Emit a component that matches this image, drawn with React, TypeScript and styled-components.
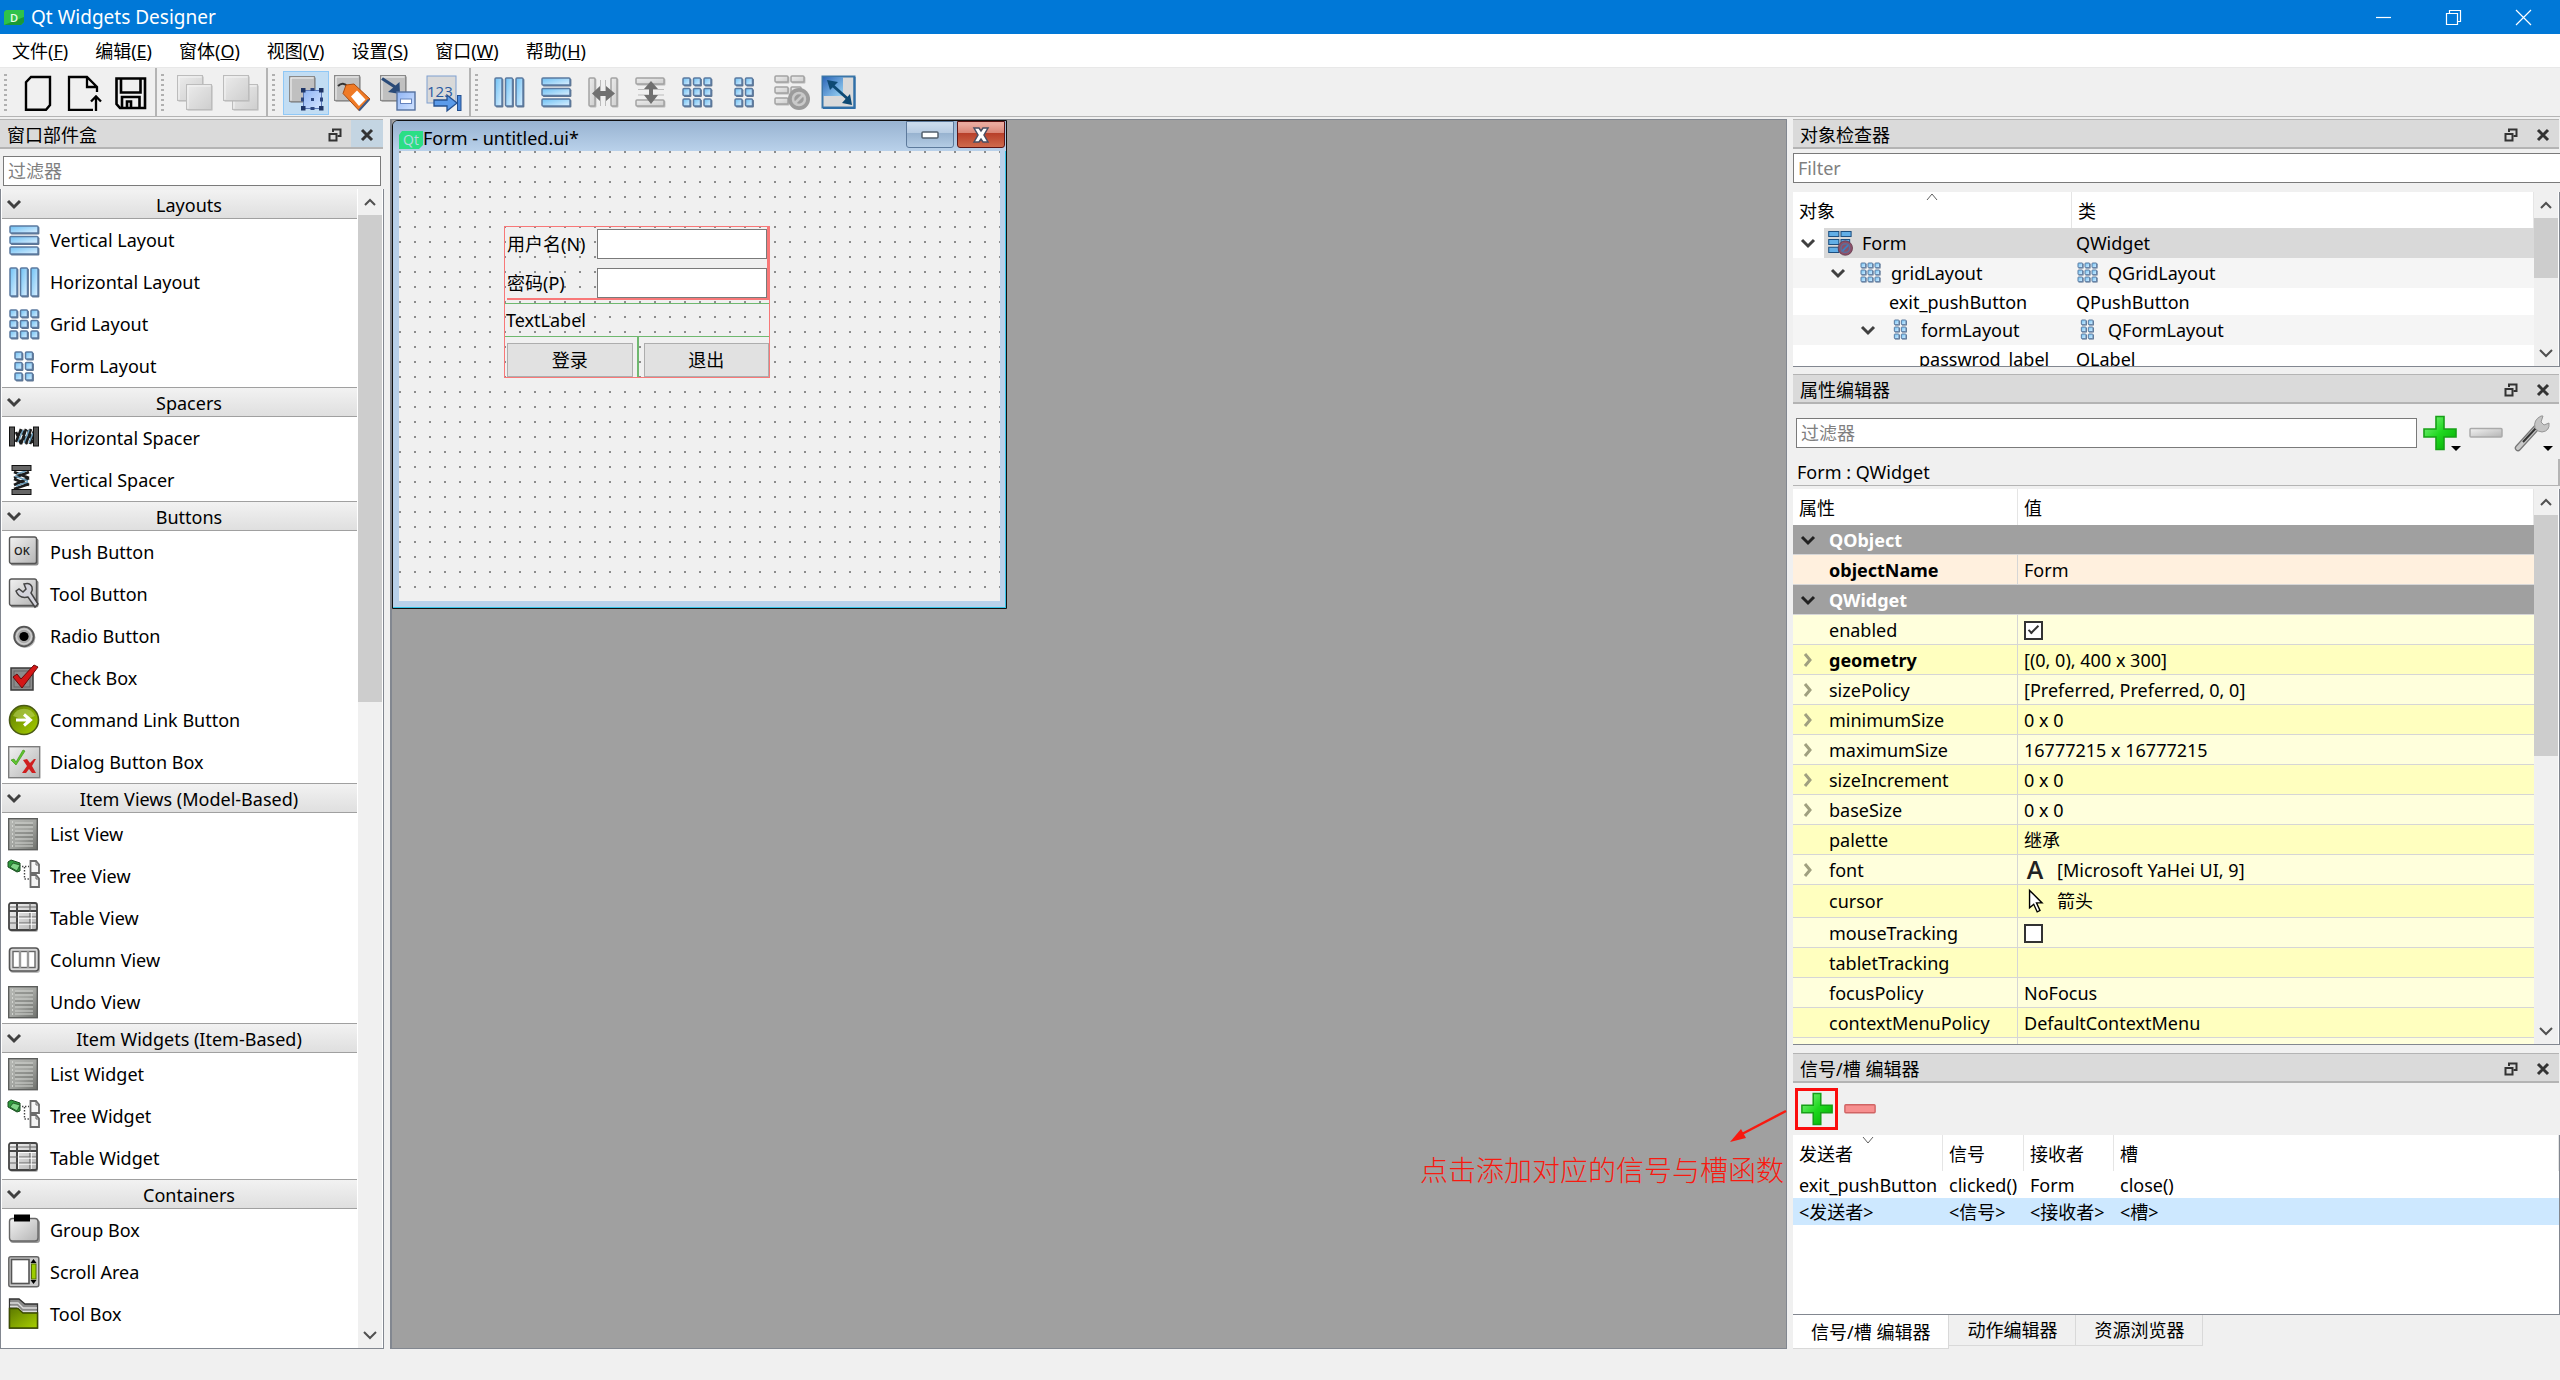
import React from "react";
import styled, { createGlobalStyle, css } from "styled-components";

const c = {
  face: "#f0f0f0",
  title: "#dadada",
  line: "#b4b4b4",
  frame: "#828790",
  desk: "#a0a0a0",
  accent: "#0078d7",
};

const Global = createGlobalStyle`
  *, *::before, *::after { box-sizing: border-box; }
  body {
    margin: 0;
    background: ${c.face};
    color: #000;
    font: 18px/24px "Noto Sans", "Noto Sans CJK SC", sans-serif;
  }
  button, input { font: inherit; color: inherit; }
  button { border: 0; padding: 0; background: none; }
  svg { display: block; flex: none; overflow: visible; }
`;

/* ---------- icon drawings ---------- */

const HiddenSvg = styled.svg`
  position: absolute;
  width: 0;
  height: 0;
`;

const Defs = () => (
  <HiddenSvg aria-hidden="true">
    <defs>
      <linearGradient id="blue" x1="0" y1="0" x2="1" y2="1">
        <stop offset="0" stopColor="#6cc0f4" />
        <stop offset="1" stopColor="#dcf0ff" />
      </linearGradient>
      <linearGradient id="grey" x1="0" y1="0" x2="1" y2="1">
        <stop offset="0" stopColor="#f2f2f2" />
        <stop offset="1" stopColor="#b4b4b4" />
      </linearGradient>
      <linearGradient id="pale" x1="0" y1="0" x2="1" y2="1">
        <stop offset="0" stopColor="#ececec" />
        <stop offset="1" stopColor="#cecece" />
      </linearGradient>
      <linearGradient id="list" x1="0" y1="0" x2="1" y2="1">
        <stop offset="0" stopColor="#b8bab6" />
        <stop offset="0.5" stopColor="#a4a6a2" />
        <stop offset="1" stopColor="#6e706c" />
      </linearGradient>
      <linearGradient id="green" x1="0" y1="0" x2="1" y2="1">
        <stop offset="0" stopColor="#8cf58c" />
        <stop offset="0.5" stopColor="#1fd81f" />
        <stop offset="1" stopColor="#00a800" />
      </linearGradient>
      <linearGradient id="lime" x1="0" y1="0" x2="1" y2="1">
        <stop offset="0" stopColor="#5d7a00" />
        <stop offset="1" stopColor="#a8d000" />
      </linearGradient>
      <linearGradient id="handle" x1="0" y1="0" x2="1" y2="1">
        <stop offset="0" stopColor="#8fb4f4" />
        <stop offset="1" stopColor="#d3e4ff" />
      </linearGradient>
      <linearGradient id="adjust" x1="0" y1="0" x2="1" y2="1">
        <stop offset="0" stopColor="#2c66b8" />
        <stop offset="1" stopColor="#9ad4f4" />
      </linearGradient>
    </defs>
  </HiddenSvg>
);

type Box = [number, number, number, number];

const Blocks = ({ list, muted }: { list: Box[]; muted?: boolean }) => (
  <>
    {list.map(([x, y, w, h]) => (
      <g key={`${x}-${y}`}>
        <rect x={x + 0.8} y={y + 0.8} width={w + 0.6} height={h + 0.6} rx="1" fill={muted ? "#b8b8b8" : "#5f7590"} />
        <rect
          x={x}
          y={y}
          width={w}
          height={h}
          rx="1"
          fill={muted ? "url(#pale)" : "url(#blue)"}
          stroke={muted ? "#a2a2a2" : "#5b7aa0"}
          strokeWidth="1.5"
        />
      </g>
    ))}
  </>
);

const cells = (xs: number[], ys: number[], s: number): Box[] =>
  ys.flatMap((y) => xs.map((x): Box => [x, y, s, s]));

const Square = ({ x, y, s, pale }: { x: number; y: number; s: number; pale?: boolean }) => (
  <g>
    <rect x={x + 1} y={y + 1} width={s} height={s} fill={pale ? "#b4b4b4" : "#707070"} />
    <rect x={x} y={y} width={s} height={s} fill={pale ? "url(#pale)" : "#c0c0c0"} stroke={pale ? "#bcbcbc" : "#8a8a8a"} />
    <path d={`M${x + 1.5} ${y + s - 1}V${y + 1.5}H${x + s - 1}`} fill="none" stroke="#f4f4f4" />
  </g>
);

const ListSheet = (
  <g>
    <rect x="0.7" y="0.7" width="28.6" height="31" fill="url(#list)" stroke="#5c5e5c" strokeWidth="1.4" />
    <path d="M7 5H25M7 9H25M7 13H25M7 17H25M7 21H25M7 25H25M7 28H25" stroke="#d2d4d0" strokeWidth="1.2" />
    <path d="M7 7H25M7 15H25M7 19H25" stroke="#7c7e7a" />
    <path d="M4.5 3V30" stroke="#d2d4d0" strokeDasharray="2 2" />
  </g>
);

const TreeDrawing = (
  <g>
    <path d="M0 2l3-2 9 3v8l-3 1-9-5z" fill="#2f9a3c" stroke="#1a4d20" />
    <path d="M2 7l3-4 7 2-3 6z" fill="#7fd486" stroke="#1a4d20" strokeWidth="0.8" />
    <path d="M14 6.5H21M16.5 7V19H22" fill="none" stroke="#444" strokeWidth="1.4" strokeDasharray="1.4 1.6" />
    <path d="M22.5 1H28l3 3.5V13H22.5zM22.5 15H28l3 3.5V27H22.5z" fill="#f4f4f4" stroke="#6b6b6b" strokeWidth="1.8" />
    <path d="M28 1v4h3M28 15v4h3" fill="none" stroke="#6b6b6b" />
  </g>
);

const TableDrawing = (
  <g>
    <rect x="2" y="2" width="28" height="28" rx="2" fill="#bbb" />
    <rect x="1" y="1" width="28" height="27" rx="2" fill="url(#grey)" stroke="#444" strokeWidth="1.8" />
    <path d="M9 1V28M1 9H29" stroke="#444" strokeWidth="2" />
    <path d="M22 1V28M2 15H28M2 21H28M2 5H28" stroke="#666" strokeWidth="1.2" />
    <path d="M10.5 10V27M10 10.5H28M23.3 10V27M11 16.2H28M11 22.2H28" stroke="#fff" strokeWidth="0.9" />
  </g>
);

const drawings: Record<string, React.ReactNode> = {
  newForm: <path d="M11 2H30V30L26 34.800H6V7.200Z" fill="none" stroke="#000" strokeWidth="2.4" />,
  openForm: (
    <path
      d="M27 34.800H3V2H21L31 12V17M21 2V12H31M30 36V22M25 26.500L30 21.500 35 26.500"
      fill="none"
      stroke="#000"
      strokeWidth="2.300"
    />
  ),
  saveForm: (
    <path
      d="M4.500 3.500H33V33H8L4.500 29ZM9 3.500V17.500H28.500V3.500M10 33V22H27.500V33M15 33V26.500H19V33"
      fill="none"
      stroke="#000"
      strokeWidth="2.600"
    />
  ),
  toBack: (
    <>
      <Square x={0.5} y={0.5} s={25} pale />
      <Square x={9.5} y={9.5} s={25} pale />
    </>
  ),
  toFront: (
    <>
      <Square x={9.5} y={9.5} s={25} pale />
      <Square x={0.5} y={0.5} s={25} pale />
    </>
  ),
  editWidgets: (
    <>
      <Square x={1.5} y={1.5} s={25} />
      <rect x="15.500" y="15.500" width="18" height="18" fill="url(#handle)" stroke="#5b78b8" />
      {cells([13, 31], [13, 31], 4).map(([x, y]) => (
        <rect key={`${x}${y}`} x={x} y={y} width="4.500" height="4.500" fill="#1f3566" />
      ))}
      <path d="M22.500 13h4v3h-4zM22.500 32h4v3h-4zM13 22.500h3v4h-3zM32 22.500h3v4h-3zM23 23h3v3h-3z" fill="#2c4680" />
    </>
  ),
  editSignals: (
    <>
      <Square x={0.5} y={0.5} s={25} />
      <path d="M4 11q5-5 10 1" fill="none" stroke="#333" strokeWidth="2" />
      <path d="M9 18.500L12 10l8-1L36 24 25 35.500Z" fill="#ef7a26" stroke="#a84b10" />
      <path d="M17 21.500l6-6 8.500 9-6.500 6.500z" fill="#fff" />
      <path d="M25 35.500l10-11" stroke="#3c5a88" strokeWidth="2" />
    </>
  ),
  editBuddies: (
    <>
      <Square x={0.5} y={0.5} s={25} />
      <path d="M2 3.500L15 12" stroke="#294a78" strokeWidth="3.200" />
      <path d="M19.500 7L20 19 8 17Z" fill="#294a78" />
      <rect x="17" y="17" width="18" height="18" fill="url(#handle)" stroke="#54719f" strokeWidth="1.400" />
      <rect x="20.500" y="24" width="11" height="4.500" fill="#fff" stroke="#6583bd" />
    </>
  ),
  tabOrder: (
    <>
      <rect x="1" y="1" width="29" height="27" fill="#d9d9d9" stroke="#7f9fd0" />
      <text x="1" y="22" fontSize="15" fill="#2a5aa0" fontFamily="Open Sans, sans-serif">123</text>
      <path d="M8 25H21V20L31 28 21 36V31H8Z" fill="#5b9bea" stroke="#24508f" strokeWidth="1.300" />
      <rect x="31.500" y="20.500" width="3.500" height="15" fill="#4a88dc" stroke="#24508f" />
    </>
  ),
  hLayout: <Blocks list={[[3, 3, 7, 28], [13.5, 3, 7, 28], [24, 3, 7, 28]]} />,
  vLayout: <Blocks list={[[3, 3, 28, 7], [3, 13.5, 28, 7], [3, 24, 28, 7]]} />,
  hSplit: (
    <>
      <Blocks muted list={[[3, 3, 6, 28], [25, 3, 6, 28]]} />
      <path d="M14.500 5V31M19.500 5V31" stroke="#bbb" />
      <path d="M6 18.500L14 11v5h6v-5l9 7.500-9 7.500v-5h-6v5z" fill="#707070" />
    </>
  ),
  vSplit: (
    <>
      <Blocks muted list={[[3, 3, 28, 6], [3, 25, 28, 6]]} />
      <path d="M5 14.500H31M5 20H31" stroke="#bbb" />
      <path d="M18 6l7 8h-5v6h5l-7 9-7-9h5v-6h-5z" fill="#707070" />
    </>
  ),
  grid: <Blocks list={cells([3, 13.5, 24], [3, 13.5, 24], 7)} />,
  form: <Blocks list={cells([8, 18.5], [3, 13.5, 24], 7)} />,
  breakLayout: (
    <>
      <Blocks muted list={[[1, 1, 13, 6], [17, 1, 13, 6], [1, 12, 13, 6], [17, 12, 10, 6], [1, 23, 13, 6]]} />
      <circle cx="25" cy="24" r="11" fill="#9b9b9b" />
      <circle cx="25" cy="24" r="6" fill="none" stroke="#c9c9c9" strokeWidth="2.500" />
      <path d="M21 28l8-8" stroke="#c9c9c9" strokeWidth="2.500" />
    </>
  ),
  brokenForm: (
    <>
      <g stroke="#1d4f80" strokeWidth="1.400" fill="#62aee6">
        <path d="M1 2h14v7H1zM18 2h14v7H18zM1 13h14v7H1zM18 13h12v7H18zM1 24h14v7H1z" />
      </g>
      <circle cx="24" cy="25" r="10" fill="#8c5068" stroke="#5d3348" />
      <path d="M19 30l10-10" stroke="#3d7fc0" strokeWidth="2.600" />
      <circle cx="24" cy="25" r="6" fill="none" stroke="#5b6f9c" strokeWidth="2" />
    </>
  ),
  adjust: (
    <>
      <rect x="1.500" y="1.500" width="32" height="31" fill="#dadada" stroke="#3b76a8" strokeWidth="2" />
      <rect x="2" y="2" width="20" height="19" fill="url(#adjust)" />
      <path d="M10 9L28 25" stroke="#0e4a74" strokeWidth="3" />
      <path d="M6 5l11 2-8 8zM31 30l-10-2 8-9z" fill="#0e4a74" />
      <path d="M33.500 2V33H2" fill="none" stroke="#2f6fa8" strokeWidth="2" />
    </>
  ),
  hSpacer: (
    <>
      <path d="M8 20L13 7M13 22L18 7M18 22L23 7M22 22L26 9M8 10L13 22M14 8L19 22M20 8L25 21" stroke="#1c1c1c" strokeWidth="2.600" />
      <path d="M10 20L15 8M16 21L21 8M21 21L25 11" stroke="#6c9dba" strokeWidth="1.500" />
      <rect x="1.500" y="5" width="5" height="19" fill="#555" stroke="#111" />
      <rect x="25.500" y="5" width="5" height="19" fill="#555" stroke="#111" />
    </>
  ),
  vSpacer: (
    <>
      <path d="M6 8L21 14M6 14L21 8M6 15L21 21M6 21L21 14M6 25L21 20" stroke="#1c1c1c" strokeWidth="2.800" />
      <path d="M7 12L20 17M8 22L20 18M9 10L18 7" stroke="#6c9dba" strokeWidth="1.600" />
      <rect x="4" y="1.500" width="19" height="5" fill="#666" stroke="#111" />
      <rect x="4" y="25.500" width="19" height="5" fill="#666" stroke="#111" />
    </>
  ),
  push: (
    <>
      <rect x="2.500" y="2.500" width="28" height="27" rx="2" fill="#8a8a8a" />
      <rect x="1.500" y="1" width="27" height="26.500" rx="2" fill="url(#grey)" stroke="#555" strokeWidth="1.400" />
      <text x="6" y="18.500" fontSize="11" fontWeight="600" fill="#222" fontFamily="Open Sans, sans-serif">OK</text>
    </>
  ),
  tool: (
    <>
      <rect x="2.500" y="2.500" width="28" height="27" rx="2" fill="#8a8a8a" />
      <rect x="1.500" y="1" width="27" height="26.500" rx="2" fill="url(#grey)" stroke="#555" strokeWidth="1.400" />
      <path d="M8 13l3-2 4 3 3-3-2-5q6-2 8 3 1 3-1 6l7 11-3 3-7-10q-9 2-12-6z" fill="#d4d4dc" stroke="#444" strokeWidth="1.500" />
    </>
  ),
  radio: (
    <>
      <circle cx="17" cy="17.500" r="10.500" fill="#bbb" />
      <circle cx="16" cy="16.500" r="9.800" fill="#a8a8a8" stroke="#555" strokeWidth="1.800" />
      <circle cx="16" cy="16.500" r="7.500" fill="none" stroke="#cfcfcf" strokeWidth="1.500" />
      <circle cx="16" cy="16.500" r="4.600" fill="#000" />
    </>
  ),
  check: (
    <>
      <rect x="3" y="6" width="22" height="22" fill="#8c8c8c" stroke="#3a3a3a" strokeWidth="1.500" />
      <rect x="6" y="9" width="16" height="16" fill="none" stroke="#666" />
      <path d="M5 15l4-3 4 5L26 3l4 2L14 26z" fill="#d41717" stroke="#6a0a0a" />
    </>
  ),
  command: (
    <>
      <circle cx="16" cy="16" r="14.500" fill="url(#lime)" stroke="#4a5a14" strokeWidth="1.600" />
      <path d="M5 12a12 12 0 0 1 22 0q-11 5-22 0z" fill="#c5dd6a" opacity="0.500" />
      <path d="M8 16H22M16 10.500L22.500 16 16 21.500" fill="none" stroke="#fff" strokeWidth="3" />
    </>
  ),
  dialog: (
    <>
      <rect x="0.700" y="0.700" width="31" height="31" fill="url(#grey)" stroke="#7d7d7d" strokeWidth="1.400" />
      <path d="M3 14l3-1 2 3 7-12 2 1L8 19z" fill="#5fc52e" stroke="#3f9a18" strokeWidth="0.700" />
      <path d="M15 14l4-1 3 4 4-4h2l-4 7 4 7h-4l-3-4-3 4h-4l5-7z" fill="#cf1f1f" />
    </>
  ),
  list: ListSheet,
  tree: TreeDrawing,
  table: TableDrawing,
  column: (
    <>
      <rect x="2" y="5" width="30" height="24" rx="3" fill="#bbb" />
      <rect x="1.500" y="4" width="29" height="23" rx="3" fill="#d8d8d8" stroke="#555" strokeWidth="1.600" />
      <rect x="5" y="7.500" width="22" height="16" fill="#fff" stroke="#666" strokeWidth="1.400" />
      <path d="M12 7V24M20 7V24" stroke="#999" strokeWidth="2.400" />
    </>
  ),
  group: (
    <>
      <rect x="2" y="6" width="30" height="23" rx="3" fill="#9a9a9a" />
      <rect x="1.500" y="4.500" width="28.500" height="22.500" rx="3" fill="url(#grey)" stroke="#666" strokeWidth="1.400" />
      <rect x="6" y="0.500" width="16" height="7" fill="#000" />
    </>
  ),
  scroll: (
    <>
      <rect x="0.800" y="0.800" width="30" height="30" rx="2" fill="#c9c9c9" stroke="#666" strokeWidth="1.500" />
      <rect x="3.500" y="3.500" width="17.500" height="24" fill="#fff" stroke="#555" strokeWidth="1.600" />
      <rect x="23.500" y="8" width="4.500" height="15" fill="#9ccc00" stroke="#577200" />
      <path d="M22.500 7l3-4 3 4zM22.500 24l3 4 3-4z" fill="#000" />
    </>
  ),
  toolbox: (
    <>
      <path d="M1.500 1H11l6 5H29.500V30H1.500Z" fill="#8b8b8b" stroke="#333" strokeWidth="1.300" />
      <path d="M2 5H10l5 5H29M2 8.500H9l5 5H29" fill="none" stroke="#ddd" strokeWidth="1.300" />
      <path d="M1.500 10.500H10l5 4.500H29.500V30H1.500Z" fill="url(#lime)" stroke="#3d4d00" strokeWidth="1.500" />
    </>
  ),
  plus: (
    <path
      d="M14 1.500h8v12.500h12v8H22v12.500h-8V22H2v-8h12z"
      fill="url(#green)"
      stroke="#17a017"
      strokeWidth="1.600"
    />
  ),
  minusGrey: <rect x="2" y="13.500" width="32" height="8.500" rx="1" fill="url(#grey)" stroke="#aaa" strokeWidth="1.500" />,
  minusRed: <rect x="2" y="13.500" width="32" height="8.500" rx="1" fill="#f78f8f" stroke="#d06464" strokeWidth="1.500" />,
  wrench: (
    <>
      <path d="M4 33L24 11" stroke="#777" strokeWidth="6.500" strokeLinecap="round" />
      <path d="M4 33L24 11" stroke="#c9c9c9" strokeWidth="4" strokeLinecap="round" />
      <path d="M9 27L22 13" stroke="#333" strokeWidth="2" />
      <path d="M21 13q-2-8 6-12l2 0-2 6 3 3 5-2q1 8-7 9-4 0-7-4z" fill="#c4c4c4" stroke="#969696" />
    </>
  ),
  arrow: <path d="M8 2V27L14 22 19 33 23 31 18 20H26Z" fill="#fff" stroke="#000" strokeWidth="2" />,
  letterA: (
    <text x="4" y="31" fontSize="36" fontWeight="600" fill="#222" fontFamily="Open Sans, sans-serif">A</text>
  ),
};

type IconProps = { name: string; size?: number; view?: string };
const Icon = ({ name, size = 36, view = "0 0 36 36" }: IconProps) => (
  <svg width={size} height={size} viewBox={view} aria-hidden="true">
    {drawings[name]}
  </svg>
);

type Dir = "up" | "down" | "right";
const chevrons: Record<Dir, string> = {
  up: "M2 10L7 5L12 10",
  down: "M1 4L7 10L13 4",
  right: "M4 1L9 7L4 13",
};
const Chevron = ({ dir, color = "#404040", weight = 3 }: { dir: Dir; color?: string; weight?: number }) => (
  <svg width="14" height="14" viewBox="0 0 14 14" aria-hidden="true">
    <path d={chevrons[dir]} fill="none" stroke={color} strokeWidth={weight} />
  </svg>
);

/* ---------- shared parts ---------- */

const Screen = styled.div`
  display: flex;
  flex-direction: column;
  height: 100vh;
  overflow: hidden;
`;

const TitleBar = styled.header`
  display: flex;
  align-items: center;
  flex: none;
  height: 34px;
  padding-left: 4px;
  gap: 7px;
  background: ${c.accent};
  color: #fff;
`;

const WindowTitle = styled.h1`
  flex: 1;
  margin: 0;
  font-size: 19px;
  font-weight: 400;
`;

const CaptionButton = styled.button`
  display: grid;
  place-items: center;
  width: 70px;
  height: 34px;
`;

const CaptionButtons = styled.div`
  display: flex;
  padding-right: 2px;
`;

const MenuBar = styled.nav`
  display: flex;
  align-items: center;
  gap: 3px;
  flex: none;
  height: 34px;
  background: #fff;
  border-bottom: 1px solid #e8e8e8;
`;

const MenuItem = styled.button`
  height: 32px;
  padding: 0 12px;
`;

const ToolRow = styled.div`
  display: flex;
  flex: none;
  height: 49px;
  border-bottom: 1px solid ${c.line};
`;

const ToolGroup = styled.div<{ $last?: boolean }>`
  display: flex;
  align-items: center;
  gap: ${(p) => (p.$last ? 1 : 0)}px;
  padding: 2px 2px 0 4px;
  ${(p) => !p.$last && css`border-right: 2px solid ${c.line};`}
`;

const Grip = styled.span`
  width: 3px;
  height: 39px;
  margin-right: 8px;
  background: repeating-linear-gradient(#b0b0b0 0 2px, transparent 2px 5px);
`;

const ToolButton = styled.button<{ $on?: boolean }>`
  display: grid;
  place-items: center;
  width: 46px;
  height: 44px;
  border: 1px solid ${(p) => (p.$on ? "#90c8f6" : "transparent")};
  background: ${(p) => (p.$on ? "#c2ddf3" : "none")};
`;

const Workspace = styled.main`
  display: grid;
  grid-template-columns: 384px minmax(0, 1fr) 767px;
  column-gap: 6px;
  flex: 1;
  min-height: 0;
  padding: 2px 0 31px;
`;

const Column = styled.div`
  display: flex;
  flex-direction: column;
  min-width: 0;
  min-height: 0;
`;

const DockBar = styled.div`
  display: flex;
  align-items: center;
  flex: none;
  height: 30px;
  margin-right: 1px;
  padding-left: 7px;
  background: ${c.title};
  border: solid ${c.line};
  border-width: 1px 0 2px;
`;

const DockTitle = styled.h2`
  flex: 1;
  margin: 0;
  padding-top: 3px;
  font-size: 18px;
  font-weight: 400;
`;

const DockButton = styled.button<{ $hot?: boolean }>`
  display: grid;
  place-items: center;
  width: 32px;
  height: 27px;
  padding-top: 3px;
  background: ${(p) => (p.$hot ? "#c4d5e2" : "none")};
`;

const DockHeader = ({ title, hot }: { title: string; hot?: boolean }) => (
  <DockBar>
    <DockTitle>{title}</DockTitle>
    <DockButton aria-label="float">
      <svg width="14" height="14" viewBox="0 0 14 14">
        <path d="M5 4V1.500H12.500V8H9.500" fill="none" stroke="#333" strokeWidth="2" />
        <path d="M1.500 6H8.500V12.500H1.500Z" fill="none" stroke="#333" strokeWidth="2" />
      </svg>
    </DockButton>
    <DockButton aria-label="close" $hot={hot}>
      <svg width="14" height="14" viewBox="0 0 14 14">
        <path d="M2 2L12 12M12 2L2 12" stroke="#333" strokeWidth="3" />
      </svg>
    </DockButton>
  </DockBar>
);

const LineEdit = styled.input`
  min-width: 0;
  height: 30px;
  padding: 0 4px;
  border: 1px solid #7a7a7a;
  background: #fff;
  outline: 0;
  &::placeholder { color: #808080; opacity: 1; }
`;

const Frame = styled.div`
  display: flex;
  min-height: 0;
  overflow: hidden;
  background: #fff;
  border: solid ${c.frame};
  border-width: 0 1px 1px 0;
`;

const Bar = styled.div`
  display: flex;
  flex-direction: column;
  flex: none;
  width: 24px;
  margin-right: 1px;
  background: ${c.face};
`;

const BarButton = styled.button`
  display: grid;
  place-items: center;
  flex: none;
  height: 26px;
`;

const Track = styled.div`
  flex: 1;
`;

const Thumb = styled.div<{ $share: number }>`
  height: ${(p) => p.$share}%;
  background: #cdcdcd;
`;

const ScrollBar = ({ share }: { share: number }) => (
  <Bar>
    <BarButton aria-label="scroll up"><Chevron dir="up" color="#505050" weight={2} /></BarButton>
    <Track><Thumb $share={share} /></Track>
    <BarButton aria-label="scroll down"><Chevron dir="down" color="#505050" weight={2} /></BarButton>
  </Bar>
);

/* ---------- widget box ---------- */

const BoxFilter = styled(LineEdit)`
  flex: none;
  margin: 7px 3px 3px;
`;

const BoxFrame = styled(Frame)`
  flex: 1;
  border-left-width: 1px;
`;

const BoxList = styled.div`
  flex: 1;
  min-width: 0;
  padding: 0 1px;
`;

const Category = styled.button`
  display: flex;
  align-items: center;
  width: 100%;
  height: 30px;
  padding: 0 0 0 5px;
  background: linear-gradient(#f2f2f2, #dfdfdf);
  border: solid ${c.desk};
  border-width: 1px 0;
  section:first-child > & { border-top-color: ${c.face}; }
`;

const CategoryName = styled.span`
  flex: 1;
  padding-top: 1px;
`;

const Entry = styled.div`
  display: flex;
  align-items: center;
  height: 42px;
  padding-left: 6px;
  gap: 10px;
`;

const categories: [string, [string, string][]][] = [
  ["Layouts", [
    ["vLayout", "Vertical Layout"],
    ["hLayout", "Horizontal Layout"],
    ["grid", "Grid Layout"],
    ["form", "Form Layout"],
  ]],
  ["Spacers", [["hSpacer", "Horizontal Spacer"], ["vSpacer", "Vertical Spacer"]]],
  ["Buttons", [
    ["push", "Push Button"],
    ["tool", "Tool Button"],
    ["radio", "Radio Button"],
    ["check", "Check Box"],
    ["command", "Command Link Button"],
    ["dialog", "Dialog Button Box"],
  ]],
  ["Item Views (Model-Based)", [
    ["list", "List View"],
    ["tree", "Tree View"],
    ["table", "Table View"],
    ["column", "Column View"],
    ["list", "Undo View"],
  ]],
  ["Item Widgets (Item-Based)", [
    ["list", "List Widget"],
    ["tree", "Tree Widget"],
    ["table", "Table Widget"],
  ]],
  ["Containers", [
    ["group", "Group Box"],
    ["scroll", "Scroll Area"],
    ["toolbox", "Tool Box"],
  ]],
];

const WidgetBox = () => (
  <Column>
    <DockHeader title="窗口部件盒" hot />
    <BoxFilter aria-label="过滤器" placeholder="过滤器" />
    <BoxFrame>
      <BoxList>
        {categories.map(([name, items]) => (
          <section key={name}>
            <Category>
              <Chevron dir="down" />
              <CategoryName>{name}</CategoryName>
            </Category>
            {items.map(([icon, label]) => (
              <Entry key={label}>
                <Icon name={icon} size={32} view={name === "Layouts" ? "1 1 32 32" : "0 0 32 32"} />
                {label}
              </Entry>
            ))}
          </section>
        ))}
      </BoxList>
      <ScrollBar share={44} />
    </BoxFrame>
  </Column>
);

/* ---------- form being designed ---------- */

const Desktop = styled.div`
  display: flex;
  align-items: flex-start;
  position: relative;
  min-width: 0;
  background: ${c.desk};
  border: solid ${c.frame};
  border-width: 1px 1px 1px 2px;
`;

const FormWindow = styled.section`
  width: 615px;
  border: 1px solid #101010;
  border-radius: 6px 0 0 0;
  background: #b9d1ea;
  box-shadow: inset -1px -1px 0 #34c3e6;
`;

const FormTitle = styled.div`
  display: flex;
  align-items: center;
  height: 30px;
  padding-left: 6px;
  background: linear-gradient(#98b3d1, #b9d1ea);
  border-radius: 5px 0 0 0;
`;

const Badge = styled.svg`
  margin-top: 8px;
`;

const FormName = styled.h2`
  flex: 1;
  margin: 0;
  padding-top: 4px;
  font-size: 18px;
  font-weight: 400;
`;

const FormButton = styled.button<{ $close?: boolean }>`
  display: grid;
  place-items: center;
  align-self: flex-start;
  width: 48px;
  height: 27px;
  margin-right: ${(p) => (p.$close ? 1 : 3)}px;
  border: 1px solid ${(p) => (p.$close ? "#5c1414" : "#5d7a9c")};
  border-radius: 0 0 3px 3px;
  background: ${(p) =>
    p.$close
      ? "linear-gradient(#e9a99d 0 10%, #d98474 45%, #b8402a 46%, #cf6a4c)"
      : "linear-gradient(#c9daec 0 10%, #b6cbe2 45%, #98b3d0 46%, #b4cce4)"};
`;

const FormBody = styled.div`
  margin: 0 6px 7px;
  padding: 75px 0 0 105px;
  height: 450px;
  background: conic-gradient(at 2px 2px, ${c.face} 75%, #8c8c8c 0) 0 0 / 15px 15px;
`;

const red = "#f87878";
const leaf = "#6fb86f";

const LayoutBox = styled.div`
  width: 266px;
  border: 1px solid ${red};
`;

const FormRows = styled.div`
  display: grid;
  grid-template-columns: 90px 1fr;
  row-gap: 9px;
  align-items: center;
  padding-top: 2px;
  margin-left: 2px;
  border: solid ${red};
  border-width: 0 2px 2px 0;
`;

const TextRow = styled.div`
  height: 33px;
  margin-top: 3px;
  padding: 4px 1px;
  border-top: 1px solid ${leaf};
`;

const ButtonRow = styled.div`
  display: flex;
  padding-left: 2px;
  border-top: 1px solid ${leaf};
`;

const Divider = styled.span`
  width: 2px;
  margin: 0 5px 0 4px;
  background: ${leaf};
`;

const PushButton = styled.button`
  flex: 1;
  height: 34px;
  margin-top: 6px;
  border: 1px solid #adadad;
  background: #e1e1e1;
`;

const Note = styled.p`
  position: absolute;
  right: 2px;
  top: 1032px;
  margin: 0;
  color: #f81a10;
  font: 300 28px/34px "Noto Sans CJK SC", sans-serif;
  white-space: nowrap;
`;

const NoteArrow = styled.svg`
  position: absolute;
  right: 0;
  top: 990px;
`;

const Designer = () => (
  <Desktop>
    <FormWindow>
      <FormTitle>
        <Badge width="24" height="18" viewBox="0 0 24 18" aria-hidden="true">
          <path d="M3 0H24V14L20 18H0V4Z" fill="#2bde85" />
          <text x="4" y="14" fontSize="14" fill="#b9d8e4" fontFamily="Open Sans, sans-serif">Qt</text>
        </Badge>
        <FormName>Form - untitled.ui*</FormName>
        <FormButton aria-label="minimize">
          <svg width="18" height="8" viewBox="0 0 18 8">
            <rect x="1" y="1" width="16" height="6" rx="1" fill="#fff" stroke="#53606e" strokeWidth="1.500" />
          </svg>
        </FormButton>
        <FormButton $close aria-label="close form">
          <svg width="18" height="16" viewBox="0 0 18 16">
            <path d="M2 1H7L9 4 11 1H16L12 8 16 15H11L9 12 7 15H2L6 8Z" fill="#fff" stroke="#4a4f63" strokeWidth="1.500" />
          </svg>
        </FormButton>
      </FormTitle>
      <FormBody>
        <LayoutBox>
          <FormRows>
            <label htmlFor="user">用户名(N)</label>
            <LineEdit id="user" />
            <label htmlFor="pass">密码(P)</label>
            <LineEdit id="pass" type="password" />
          </FormRows>
          <TextRow>TextLabel</TextRow>
          <ButtonRow>
            <PushButton>登录</PushButton>
            <Divider />
            <PushButton>退出</PushButton>
          </ButtonRow>
        </LayoutBox>
      </FormBody>
    </FormWindow>
    <NoteArrow width="56" height="34" viewBox="0 0 56 34" aria-hidden="true">
      <path d="M56 1L12 24" stroke="#f81a10" strokeWidth="2.400" />
      <path d="M0 32L11 19 16 28Z" fill="#f81a10" />
    </NoteArrow>
    <Note>点击添加对应的信号与槽函数</Note>
  </Desktop>
);

/* ---------- object inspector ---------- */

const Grid = styled.table`
  flex: 1;
  min-width: 0;
  table-layout: fixed;
  border-collapse: separate;
  border-spacing: 0;
  align-self: flex-start;
`;

const Head = styled.th<{ $width?: number }>`
  position: relative;
  width: ${(p) => (p.$width ? `${p.$width}px` : "auto")};
  height: 36px;
  padding: 2px 0 0 6px;
  font-weight: 400;
  text-align: left;
  border-right: 1px solid #e5e5e5;
`;

const SortMark = styled.svg`
  position: absolute;
  left: calc(50% - 6px);
  top: 1px;
`;

const Sort = ({ down }: { down?: boolean }) => (
  <SortMark width="12" height="8" viewBox="0 0 12 8" aria-hidden="true">
    <path d={down ? "M1 1L6 7 11 1" : "M1 7L6 1 11 7"} fill="none" stroke="#606060" />
  </SortMark>
);

const TreeRow = styled.tr<{ $bg?: string; $short?: boolean }>`
  height: ${(p) => (p.$short ? 27 : 30)}px;
  background: ${(p) => p.$bg ?? "#fff"};
`;

const TreeCell = styled.td<{ $depth?: number }>`
  padding: 0 0 0 ${(p) => (p.$depth === undefined ? 4 : p.$depth * 30 + 8)}px;
`;

const CellFlow = styled.div<{ $gap?: number }>`
  display: flex;
  align-items: center;
  gap: ${(p) => p.$gap ?? 8}px;
  white-space: nowrap;
`;

const Twist = styled.span`
  flex: none;
  width: 20px;
`;

const RootMark = styled.span`
  display: flex;
  align-items: center;
  width: 31px;
  height: 30px;
  margin: 0 -4px 0 -8px;
  padding-left: 8px;
  background: #fff;
`;

const Leaf = styled.span`
  padding-left: 58px;
`;

const InspectorFilter = styled(LineEdit)`
  flex: none;
  margin: 4px -1px 9px 0;
`;

const InspectorFrame = styled(Frame)`
  flex: none;
  height: 175px;
  margin-bottom: 7px;
`;

const LayoutRow = ({ depth, icon, name, type }: { depth: number; icon: string; name: string; type: string }) => (
  <TreeRow $bg="#f5f5f5">
    <TreeCell $depth={depth}>
      <CellFlow>
        <Twist><Chevron dir="down" /></Twist>
        <Icon name={icon} size={24} />
        {name}
      </CellFlow>
    </TreeCell>
    <TreeCell><CellFlow><Icon name={icon} size={24} />{type}</CellFlow></TreeCell>
  </TreeRow>
);

const LeafRow = ({ depth, name, type }: { depth: number; name: string; type: string }) => (
  <TreeRow $short>
    <TreeCell $depth={depth}><Leaf>{name}</Leaf></TreeCell>
    <TreeCell>{type}</TreeCell>
  </TreeRow>
);

const Inspector = () => (
  <>
    <DockHeader title="对象检查器" />
    <InspectorFilter aria-label="Filter" placeholder="Filter" />
    <InspectorFrame>
      <Grid>
        <thead>
          <tr>
            <Head $width={279}>对象<Sort /></Head>
            <Head>类</Head>
          </tr>
        </thead>
        <tbody>
          <TreeRow $bg="#d9d9d9">
            <TreeCell $depth={0}>
              <CellFlow>
                <RootMark><Chevron dir="down" /></RootMark>
                <Icon name="brokenForm" size={26} />
                Form
              </CellFlow>
            </TreeCell>
            <TreeCell>QWidget</TreeCell>
          </TreeRow>
          <LayoutRow depth={1} icon="grid" name="gridLayout" type="QGridLayout" />
          <LeafRow depth={1} name="exit_pushButton" type="QPushButton" />
          <LayoutRow depth={2} icon="form" name="formLayout" type="QFormLayout" />
          <LeafRow depth={2} name="passwrod_label" type="QLabel" />
        </tbody>
      </Grid>
      <ScrollBar share={49} />
    </InspectorFrame>
  </>
);

/* ---------- property editor ---------- */

const PropertyTools = styled.div`
  display: flex;
  align-items: center;
  flex: none;
  height: 55px;
  padding: 3px 5px 0 3px;
`;

const PropertyFilter = styled(LineEdit)`
  flex: 1;
`;

const DropButton = styled.button`
  display: flex;
  align-items: flex-end;
  width: 46px;
  padding-left: 5px;
`;

const DropMark = styled.span`
  flex: none;
  margin-left: -7px;
  border: 5px solid transparent;
  border-top-color: #000;
  border-bottom-width: 0;
`;

const ObjectLine = styled.div`
  flex: none;
  height: 27px;
  margin-bottom: 3px;
  padding: 1px 0 0 4px;
  border: solid ${c.line};
  border-width: 0 2px 1px 0;
`;

const PropertyFrame = styled(Frame)`
  flex: none;
  height: 556px;
  margin-bottom: 8px;
`;

const PropRow = styled.tr<{ $tone: string }>`
  background: ${(p) => p.$tone};
`;

const PropCell = styled.td<{ $bold?: boolean; $tall?: boolean }>`
  height: ${(p) => (p.$tall ? 33 : 30)}px;
  padding: 0 0 0 8px;
  border: solid #d6d6d6;
  border-width: 0 0 1px;
  font-weight: ${(p) => (p.$bold ? 700 : 400)};
  &:first-child:not([colspan]) { border-right-width: 1px; }
  &:last-child:not([colspan]) { padding-left: 6px; }
  &[colspan] { color: #fff; }
`;

const MarkSlot = styled.span`
  flex: none;
  width: 14px;
`;

const Check = styled.input`
  appearance: none;
  display: grid;
  place-items: center;
  width: 19px;
  height: 19px;
  margin: 1px 0 0;
  border: 2px solid #333;
  background: #fff;
  &:checked::after {
    content: "";
    width: 11px;
    height: 5px;
    margin-top: -4px;
    border: solid #333;
    border-width: 0 0 2px 2px;
    transform: rotate(-45deg);
  }
`;

type Prop = { name: string; value?: string; open?: boolean; bold?: boolean; icon?: string; check?: boolean; tall?: boolean };
const props: Prop[] = [
  { name: "enabled", check: true },
  { name: "geometry", value: "[(0, 0), 400 x 300]", open: true, bold: true },
  { name: "sizePolicy", value: "[Preferred, Preferred, 0, 0]", open: true },
  { name: "minimumSize", value: "0 x 0", open: true },
  { name: "maximumSize", value: "16777215 x 16777215", open: true },
  { name: "sizeIncrement", value: "0 x 0", open: true },
  { name: "baseSize", value: "0 x 0", open: true },
  { name: "palette", value: "继承" },
  { name: "font", value: "[Microsoft YaHei UI, 9]", open: true, icon: "letterA" },
  { name: "cursor", value: "箭头", icon: "arrow", tall: true },
  { name: "mouseTracking", check: false },
  { name: "tabletTracking" },
  { name: "focusPolicy", value: "NoFocus" },
  { name: "contextMenuPolicy", value: "DefaultContextMenu" },
];

const GroupRow = ({ name }: { name: string }) => (
  <PropRow $tone={c.desk}>
    <PropCell colSpan={2} $bold>
      <CellFlow $gap={14}><Chevron dir="down" color="#222" />{name}</CellFlow>
    </PropCell>
  </PropRow>
);

const Properties = () => (
  <>
    <DockHeader title="属性编辑器" />
    <PropertyTools>
      <PropertyFilter aria-label="过滤器" placeholder="过滤器" />
      <DropButton aria-label="add property"><Icon name="plus" /><DropMark /></DropButton>
      <DropButton aria-label="remove property"><Icon name="minusGrey" /></DropButton>
      <DropButton aria-label="configure"><Icon name="wrench" /><DropMark /></DropButton>
    </PropertyTools>
    <ObjectLine>Form : QWidget</ObjectLine>
    <PropertyFrame>
      <Grid>
        <thead>
          <tr>
            <Head $width={225}>属性</Head>
            <Head>值</Head>
          </tr>
        </thead>
        <tbody>
          <GroupRow name="QObject" />
          <PropRow $tone="#fff0de">
            <PropCell $bold><CellFlow $gap={14}><MarkSlot />objectName</CellFlow></PropCell>
            <PropCell>Form</PropCell>
          </PropRow>
          <GroupRow name="QWidget" />
          {props.map((p, i) => (
            <PropRow key={p.name} $tone={i % 2 ? "#ffffbf" : "#ffffdc"}>
              <PropCell $bold={p.bold} $tall={p.tall}>
                <CellFlow $gap={14}>
                  {p.open ? <Chevron dir="right" color="#a0a080" /> : <MarkSlot />}
                  {p.name}
                </CellFlow>
              </PropCell>
              <PropCell>
                {p.check !== undefined ? (
                  <Check type="checkbox" aria-label={p.name} defaultChecked={p.check} />
                ) : (
                  <CellFlow>
                    {p.icon && <Icon name={p.icon} size={25} />}
                    {p.value}
                  </CellFlow>
                )}
              </PropCell>
            </PropRow>
          ))}
          <PropRow $tone="#ffffdc">
            <PropCell />
            <PropCell />
          </PropRow>
        </tbody>
      </Grid>
      <ScrollBar share={48} />
    </PropertyFrame>
  </>
);

/* ---------- signal editor ---------- */

const SignalTools = styled.div`
  display: flex;
  align-items: center;
  flex: none;
  height: 52px;
  padding-left: 2px;
`;

const SignalButton = styled.button<{ $marked?: boolean }>`
  display: grid;
  place-items: center;
  width: 43px;
  height: 42px;
  border: 3px solid ${(p) => (p.$marked ? "#fb0d0d" : "transparent")};
`;

const SignalFrame = styled(Frame)`
  flex: 1;
`;

const SignalRow = styled.tr<{ $on?: boolean }>`
  height: 27px;
  background: ${(p) => (p.$on ? "#cde8ff" : "#fff")};
`;

const SignalCell = styled.td`
  padding: 0 0 0 6px;
  white-space: nowrap;
`;

const Tabs = styled.div`
  display: flex;
  align-items: flex-start;
  flex: none;
  height: 34px;
`;

const Tab = styled.button<{ $on?: boolean }>`
  height: ${(p) => (p.$on ? 34 : 31)}px;
  padding: 0 18px;
  border: solid #d9d9d9;
  border-width: 0 1px 1px 0;
  background: ${(p) => (p.$on ? "#fff" : c.face)};
`;

const Signals = () => (
  <>
    <DockHeader title="信号/槽 编辑器" />
    <SignalTools>
      <SignalButton $marked aria-label="add connection"><Icon name="plus" size={34} /></SignalButton>
      <SignalButton aria-label="remove connection"><Icon name="minusRed" size={34} /></SignalButton>
    </SignalTools>
    <SignalFrame>
      <Grid>
        <thead>
          <tr>
            <Head $width={150}>发送者<Sort down /></Head>
            <Head $width={81}>信号</Head>
            <Head $width={90}>接收者</Head>
            <Head>槽</Head>
          </tr>
        </thead>
        <tbody>
          <SignalRow>
            <SignalCell>exit_pushButton</SignalCell>
            <SignalCell>clicked()</SignalCell>
            <SignalCell>Form</SignalCell>
            <SignalCell>close()</SignalCell>
          </SignalRow>
          <SignalRow $on>
            <SignalCell>&lt;发送者&gt;</SignalCell>
            <SignalCell>&lt;信号&gt;</SignalCell>
            <SignalCell>&lt;接收者&gt;</SignalCell>
            <SignalCell>&lt;槽&gt;</SignalCell>
          </SignalRow>
        </tbody>
      </Grid>
    </SignalFrame>
    <Tabs>
      <Tab $on>信号/槽 编辑器</Tab>
      <Tab>动作编辑器</Tab>
      <Tab>资源浏览器</Tab>
    </Tabs>
  </>
);

/* ---------- window chrome ---------- */

const menus: [string, string][] = [
  ["文件", "F"],
  ["编辑", "E"],
  ["窗体", "O"],
  ["视图", "V"],
  ["设置", "S"],
  ["窗口", "W"],
  ["帮助", "H"],
];

const toolGroups = [
  ["newForm", "openForm", "saveForm"],
  ["toBack", "toFront"],
  ["editWidgets", "editSignals", "editBuddies", "tabOrder"],
  ["hLayout", "vLayout", "hSplit", "vSplit", "grid", "form", "breakLayout", "adjust"],
];

const captions: [string, string][] = [
  ["minimize window", "M0 7.500H15"],
  ["restore window", "M0.500 3.500H11.500V14.500H0.500ZM3.500 3.500V0.500H14.500V11.500H11.500"],
  ["close window", "M0 0L15 15M15 0L0 15"],
];

export default function App() {
  return (
    <Screen>
      <Global />
      <Defs />
      <TitleBar>
        <svg width="20" height="15" viewBox="0 0 20 15" aria-hidden="true">
          <path d="M2 0H20V12L17 15H0V2Z" fill="#2fc24a" />
          <path d="M0 15L17 15 20 12V7Z" fill="#1a9a36" />
          <text x="6" y="12" fontSize="11" fontWeight="600" fill="#e8ffe8" fontFamily="Open Sans, sans-serif">D</text>
        </svg>
        <WindowTitle>Qt Widgets Designer</WindowTitle>
        <CaptionButtons>
          {captions.map(([label, d]) => (
            <CaptionButton key={label} aria-label={label}>
              <svg width="15" height="15" viewBox="0 0 15 15">
                <path d={d} fill="none" stroke="#fff" strokeWidth="1.200" />
              </svg>
            </CaptionButton>
          ))}
        </CaptionButtons>
      </TitleBar>
      <MenuBar>
        {menus.map(([label, key]) => (
          <MenuItem key={key}>
            {label}(<u>{key}</u>)
          </MenuItem>
        ))}
      </MenuBar>
      <ToolRow>
        {toolGroups.map((group, i) => (
          <ToolGroup key={group[0]} $last={i === toolGroups.length - 1}>
            <Grip />
            {group.map((name) => (
              <ToolButton key={name} aria-label={name} $on={name === "editWidgets"}>
                <Icon name={name} />
              </ToolButton>
            ))}
          </ToolGroup>
        ))}
      </ToolRow>
      <Workspace>
        <WidgetBox />
        <Designer />
        <Column>
          <Inspector />
          <Properties />
          <Signals />
        </Column>
      </Workspace>
    </Screen>
  );
}
